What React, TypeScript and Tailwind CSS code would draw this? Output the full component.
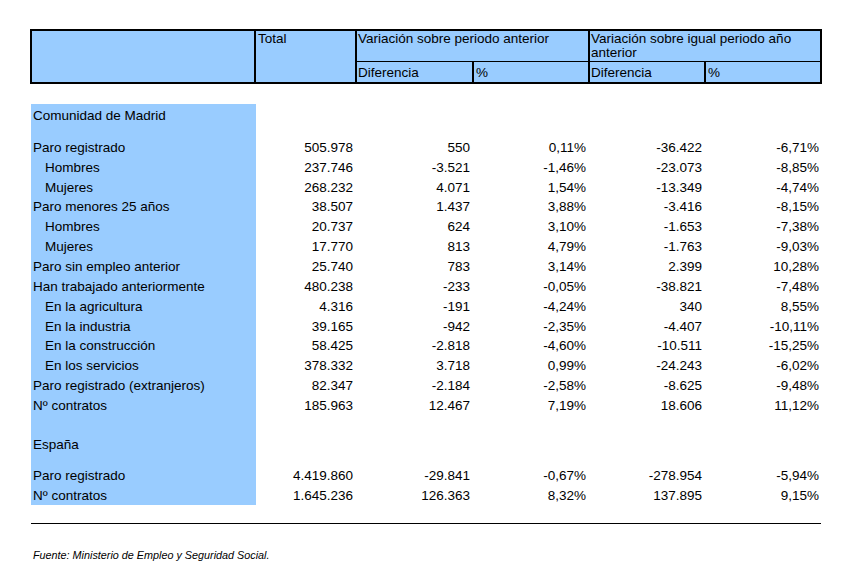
type Row = { label: string; indent?: boolean; values: string[] };

const madrid: Row[] = [
  { label: "Paro registrado", values: ["505.978", "550", "0,11%", "-36.422", "-6,71%"] },
  { label: "Hombres", indent: true, values: ["237.746", "-3.521", "-1,46%", "-23.073", "-8,85%"] },
  { label: "Mujeres", indent: true, values: ["268.232", "4.071", "1,54%", "-13.349", "-4,74%"] },
  { label: "Paro menores 25 años", values: ["38.507", "1.437", "3,88%", "-3.416", "-8,15%"] },
  { label: "Hombres", indent: true, values: ["20.737", "624", "3,10%", "-1.653", "-7,38%"] },
  { label: "Mujeres", indent: true, values: ["17.770", "813", "4,79%", "-1.763", "-9,03%"] },
  { label: "Paro sin empleo anterior", values: ["25.740", "783", "3,14%", "2.399", "10,28%"] },
  { label: "Han trabajado anteriormente", values: ["480.238", "-233", "-0,05%", "-38.821", "-7,48%"] },
  { label: "En la agricultura", indent: true, values: ["4.316", "-191", "-4,24%", "340", "8,55%"] },
  { label: "En la industria", indent: true, values: ["39.165", "-942", "-2,35%", "-4.407", "-10,11%"] },
  { label: "En la construcción", indent: true, values: ["58.425", "-2.818", "-4,60%", "-10.511", "-15,25%"] },
  { label: "En los servicios", indent: true, values: ["378.332", "3.718", "0,99%", "-24.243", "-6,02%"] },
  { label: "Paro registrado (extranjeros)", values: ["82.347", "-2.184", "-2,58%", "-8.625", "-9,48%"] },
  { label: "Nº contratos", values: ["185.963", "12.467", "7,19%", "18.606", "11,12%"] },
];

const espana: Row[] = [
  { label: "Paro registrado", values: ["4.419.860", "-29.841", "-0,67%", "-278.954", "-5,94%"] },
  { label: "Nº contratos", values: ["1.645.236", "126.363", "8,32%", "137.895", "9,15%"] },
];

const colWidths = ["w-[99px]", "w-[117px]", "w-[116px]", "w-[116px]", "w-[117px]"];

function DataRow({ row }: { row: Row }) {
  return (
    <div className="flex h-[19.85px]">
      <div className={`flex w-[225px] items-center bg-[#99ccff] pt-[1px] ${row.indent ? "pl-[14px]" : "pl-[2px]"}`}>{row.label}</div>
      {row.values.map((value, i) => (
        <div key={i} className={`flex items-center justify-end pr-[2px] pt-[1px] ${colWidths[i]}`}>
          {value}
        </div>
      ))}
    </div>
  );
}

function SectionTitle({ label, height }: { label: string; height: string }) {
  return <div className={`flex w-[225px] items-center bg-[#99ccff] pl-[2px] pt-[1px] ${height}`}>{label}</div>;
}

function Spacer({ height }: { height: string }) {
  return <div className={`w-[225px] bg-[#99ccff] ${height}`} />;
}

function SubHeader({ width }: { width: string }) {
  return (
    <div className="flex flex-1 items-center">
      <div className={`flex h-full items-center pl-[1px] ${width}`}>Diferencia</div>
      <div className="flex h-full flex-1 items-center border-l-2 border-black pl-[2px]">%</div>
    </div>
  );
}

export default function App() {
  return (
    <div className="h-[578px] w-[849px] bg-white text-[13.5px] leading-[15px] text-black" style={{ fontFamily: '"Liberation Sans", Arial, sans-serif' }}>
      <div className="ml-[30px] pt-[29px]">
        <div className="flex h-[55px] w-[792px] border-2 border-black bg-[#99ccff]">
          <div className="w-[222px]" />
          <div className="w-[101px] border-l-2 border-black pl-[2px] pt-[1px] leading-[14px]">Total</div>
          <div className="flex w-[233px] flex-col border-l-2 border-black">
            <div className="h-[31px] border-b border-black pl-[1px] pt-[1px] leading-[14px]">Variación sobre periodo anterior</div>
            <SubHeader width="w-[115px]" />
          </div>
          <div className="flex w-[232px] flex-col border-l-2 border-black">
            <div className="h-[31px] border-b border-black pl-[1px] pt-[1px] leading-[14px]">
              Variación sobre igual periodo año
              <br />
              anterior
            </div>
            <SubHeader width="w-[114px]" />
          </div>
        </div>
      </div>

      <div className="ml-[31px] mt-[20px]">
        <SectionTitle label="Comunidad de Madrid" height="h-[22px]" />
        <Spacer height="h-[11px]" />
        {madrid.map((row, i) => (
          <DataRow key={i} row={row} />
        ))}
        <Spacer height="h-[19px]" />
        <SectionTitle label="España" height="h-[20px]" />
        <Spacer height="h-[11px]" />
        {espana.map((row, i) => (
          <DataRow key={i} row={row} />
        ))}
      </div>

      <div className="ml-[31px] mt-[18px] h-px w-[790px] bg-black" />
      <p className="ml-[33px] mt-[25px] text-[10.8px] italic leading-[12px]">Fuente: Ministerio de Empleo y Seguridad Social.</p>
    </div>
  );
}
